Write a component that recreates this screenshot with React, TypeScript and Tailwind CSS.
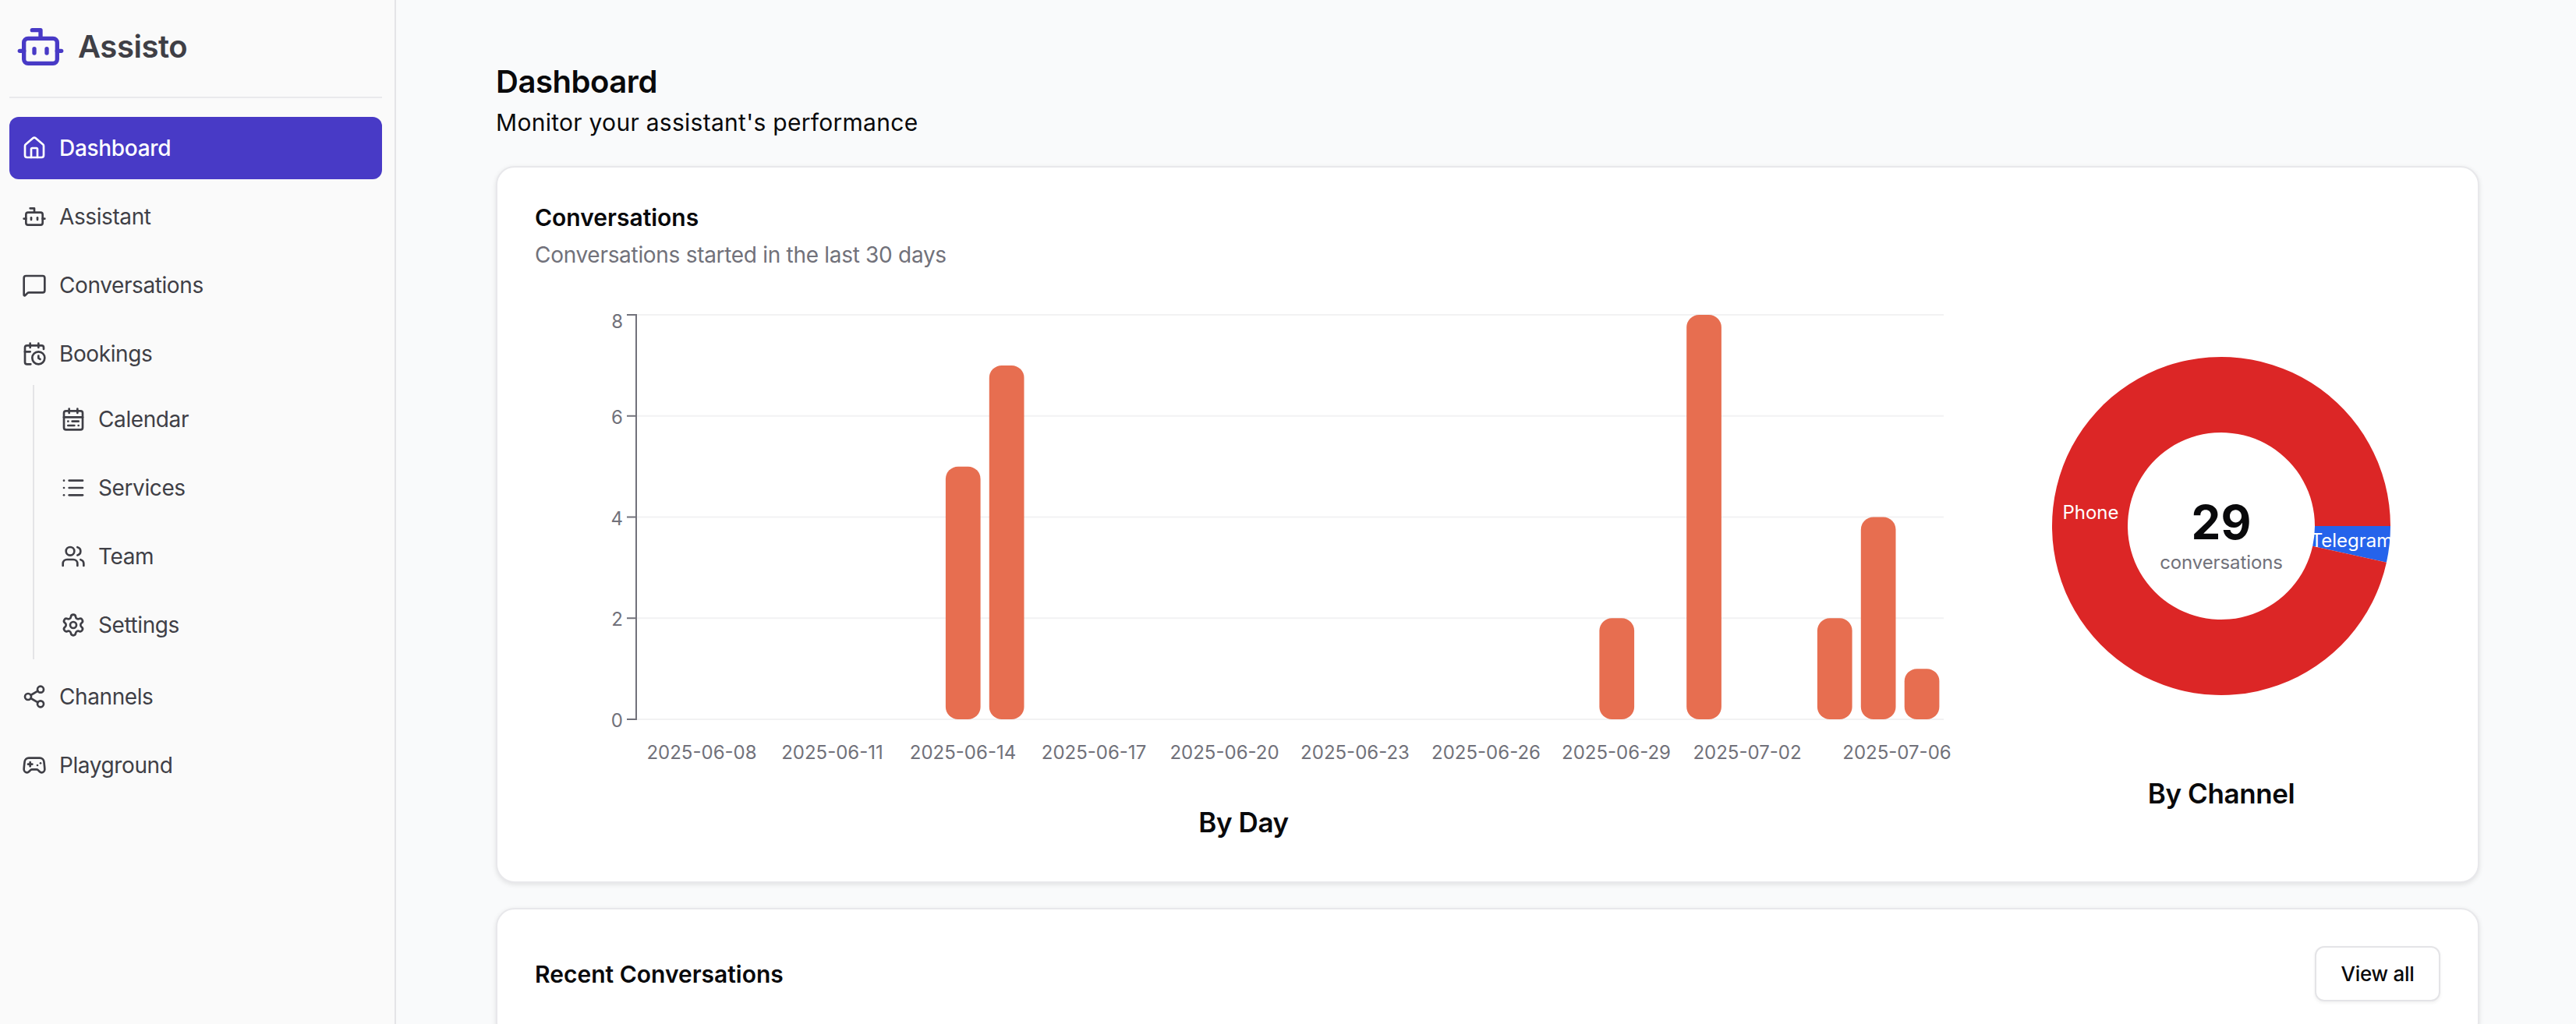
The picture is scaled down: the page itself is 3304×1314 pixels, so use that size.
import { Bot, CalendarClock, CalendarRange, Gamepad2, House, List, MessageSquare, Settings, Share2, Users } from "lucide-react";
import type { ComponentType } from "react";

type Icon = ComponentType<{ size?: number; strokeWidth?: number; className?: string }>;

function NavItem({ icon: I, label, active }: { icon: Icon; label: string; active?: boolean }) {
  return (
    <div
      className={
        active
          ? "flex h-20 items-center gap-4 rounded-xl bg-[#483ac6] px-4 text-[28px] font-medium tracking-[-0.3px] text-white"
          : "flex h-20 items-center gap-4 rounded-xl px-4 text-[28px] tracking-[-0.4px] text-[#3f3f46]"
      }
    >
      <I size={32} />
      <span>{label}</span>
    </div>
  );
}

const AX = 130;
const STEP = 1677 / 30;
const yOf = (v: number) => 543 - (v * 519) / 8;
const bars: [number, number][] = [
  [7, 5],
  [8, 7],
  [22, 2],
  [24, 8],
  [27, 2],
  [28, 4],
  [29, 1],
];
const xLabels: [string, number][] = [
  ["2025-06-08", 214],
  ["2025-06-11", 381.5],
  ["2025-06-14", 549],
  ["2025-06-17", 717],
  ["2025-06-20", 884.5],
  ["2025-06-23", 1052],
  ["2025-06-26", 1220],
  ["2025-06-29", 1387],
  ["2025-07-02", 1555],
  ["2025-07-06", 1747],
];

function BarChart() {
  return (
    <svg width={1818} height={620} viewBox="0 0 1818 620" className="block" fontSize={24}>
      {[0, 2, 4, 6, 8].map((v) => (
        <g key={v}>
          <line x1={AX} x2={1807} y1={yOf(v)} y2={yOf(v)} stroke="#f2f2f3" strokeWidth={2} />
          <line x1={AX - 12} x2={AX} y1={yOf(v)} y2={yOf(v)} stroke="#71717a" strokeWidth={2} />
          <text x={113} y={v === 8 ? yOf(v) + 17 : yOf(v) + 10} textAnchor="end" fill="#71717a">
            {v}
          </text>
        </g>
      ))}
      <line x1={AX} x2={AX} y1={23} y2={544} stroke="#71717a" strokeWidth={2} />
      {bars.map(([k, v]) => (
        <rect
          key={k}
          x={AX + k * STEP + 5.6}
          y={yOf(v)}
          width={44.7}
          height={(v * 519) / 8}
          rx={16}
          fill="#e76e50"
        />
      ))}
      {xLabels.map(([t, x]) => (
        <text key={t} x={x} y={594} textAnchor="middle" fill="#71717a">
          {t}
        </text>
      ))}
    </svg>
  );
}

function Donut() {
  const cx = 281;
  const cy = 295;
  const R = 217;
  const r = 120;
  const a = (2 * Math.PI) / 29;
  const wedge = (from: number, to: number, large: number) => {
    const p = (rad: number, ang: number) => `${cx + rad * Math.cos(ang)} ${cy + rad * Math.sin(ang)}`;
    return `M${p(R, from)} A${R} ${R} 0 ${large} 1 ${p(R, to)} L${p(r, to)} A${r} ${r} 0 ${large} 0 ${p(r, from)} Z`;
  };
  return (
    <svg width={562} height={560} viewBox="0 0 562 560" className="block">
      <path d={wedge(0, a, 0)} fill="#2563eb" />
      <path d={wedge(a, 2 * Math.PI, 1)} fill="#dc2626" />
      <text x={cx - 167.5} y={cy - 18 + 9} textAnchor="middle" fill="#fff" fontSize={24}>
        Phone
      </text>
      <text x={cx + 167.5} y={cy + 18 + 9} textAnchor="middle" fill="#fff" fontSize={24}>
        Telegram
      </text>
      <text x={cx} y={cy + 17} textAnchor="middle" fill="#09090b" fontSize={60} fontWeight={700}>
        29
      </text>
      <text x={cx} y={cy + 55} textAnchor="middle" fill="#71717a" fontSize={24} letterSpacing={-0.1}>
        conversations
      </text>
    </svg>
  );
}

export default function App() {
  return (
    <div className="flex h-[1314px] w-[3304px] overflow-hidden bg-[#f9fafb] font-[family-name:Inter,sans-serif] text-[#09090b] antialiased">
      <aside className="flex w-[508px] shrink-0 flex-col border-r-2 border-[#e4e4e7] bg-[#fafafa] pr-4 pl-3">
        <div className="flex h-[124px] shrink-0 items-center gap-4 pb-1 pl-2">
          <Bot size={64} strokeWidth={2} className="text-[#483ac6]" />
          <span className="text-[40px] font-semibold tracking-[-0.45px] text-[#3f3f46]">Assisto</span>
        </div>
        <div className="h-0.5 shrink-0 bg-[#e9e9ec]" />
        <nav className="mt-6 flex flex-col gap-2">
          <NavItem icon={House} label="Dashboard" active />
          <NavItem icon={Bot} label="Assistant" />
          <NavItem icon={MessageSquare} label="Conversations" />
          <div>
            <NavItem icon={CalendarClock} label="Bookings" />
            <div className="ml-[30px] flex flex-col gap-2 border-l-2 border-[#e4e4e7] py-1 pl-[18px]">
              <NavItem icon={CalendarRange} label="Calendar" />
              <NavItem icon={List} label="Services" />
              <NavItem icon={Users} label="Team" />
              <NavItem icon={Settings} label="Settings" />
            </div>
          </div>
          <NavItem icon={Share2} label="Channels" />
          <NavItem icon={Gamepad2} label="Playground" />
        </nav>
      </aside>
      <main className="min-w-0 flex-1 pt-[77px] pr-[124px] pl-[128px]">
        <h1 className="text-[40px] leading-[56px] font-semibold tracking-[-0.45px]">Dashboard</h1>
        <p className="text-[30px] leading-[48px] tracking-[0.28px]">Monitor your assistant's performance</p>
        <section className="mt-8 rounded-3xl border-2 border-[#e8e8eb] bg-white px-12 pt-12 pb-[54px] shadow-[0_2px_6px_rgba(0,0,0,0.1)]">
          <h2 className="text-[30px] leading-8 font-semibold">Conversations</h2>
          <p className="mt-3 text-[28px] leading-10 tracking-[-0.3px] text-[#71717a]">Conversations started in the last 30 days</p>
          <div className="mt-[33px] flex items-start gap-16">
            <div className="w-[1818px] shrink-0">
              <BarChart />
              <h3 className="mt-[33px] text-center text-[35px] leading-[44px] font-semibold tracking-[-0.4px]">By Day</h3>
            </div>
            <div className="min-w-0 flex-1">
              <Donut />
              <h3 className="mt-[56px] text-center text-[35px] leading-[44px] font-semibold tracking-[-0.4px]">By Channel</h3>
            </div>
          </div>
        </section>
        <section className="mt-8 rounded-3xl border-2 border-[#e8e8eb] bg-white px-12 pt-[47px] pb-12 shadow-[0_2px_6px_rgba(0,0,0,0.1)]">
          <div className="flex items-center justify-between">
            <h2 className="pt-0.5 text-[30px] font-semibold">Recent Conversations</h2>
            <button className="h-[71px] w-[161px] rounded-xl border-2 border-[#e4e4e7] bg-white text-center text-[26px] font-medium tracking-[-0.3px] shadow-[0_2px_4px_rgba(0,0,0,0.06)]">
              View all
            </button>
          </div>
        </section>
      </main>
    </div>
  );
}
